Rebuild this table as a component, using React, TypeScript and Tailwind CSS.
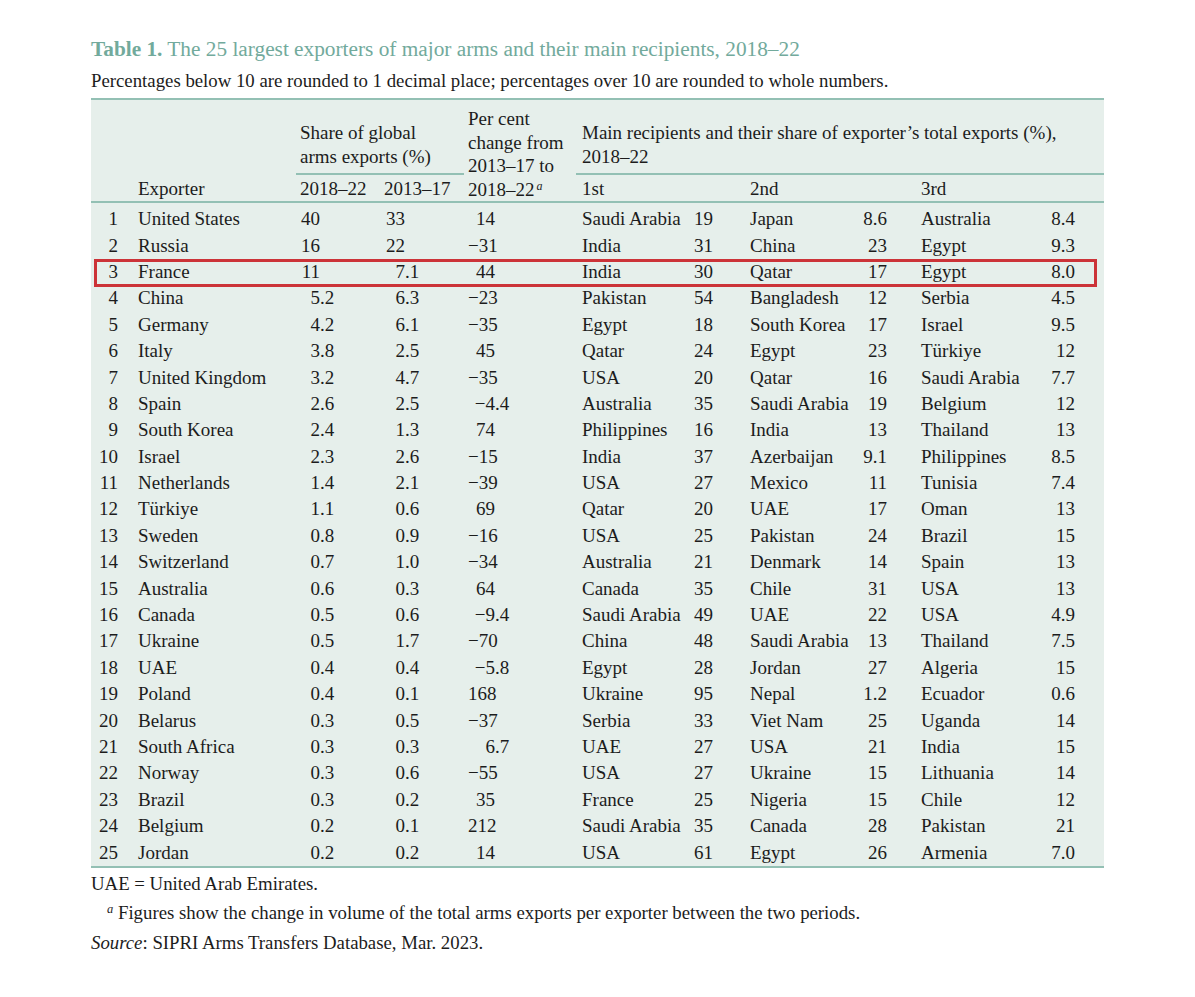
const rows: [string, string, string, string, string, string, string, string, string, string, string][] = [
  ["1", "United States", "40", "33", "14", "Saudi Arabia", "19", "Japan", "8.6", "Australia", "8.4"],
  ["2", "Russia", "16", "22", "−31", "India", "31", "China", "23", "Egypt", "9.3"],
  ["3", "France", "11", "7.1", "44", "India", "30", "Qatar", "17", "Egypt", "8.0"],
  ["4", "China", "5.2", "6.3", "−23", "Pakistan", "54", "Bangladesh", "12", "Serbia", "4.5"],
  ["5", "Germany", "4.2", "6.1", "−35", "Egypt", "18", "South Korea", "17", "Israel", "9.5"],
  ["6", "Italy", "3.8", "2.5", "45", "Qatar", "24", "Egypt", "23", "Türkiye", "12"],
  ["7", "United Kingdom", "3.2", "4.7", "−35", "USA", "20", "Qatar", "16", "Saudi Arabia", "7.7"],
  ["8", "Spain", "2.6", "2.5", "−4.4", "Australia", "35", "Saudi Arabia", "19", "Belgium", "12"],
  ["9", "South Korea", "2.4", "1.3", "74", "Philippines", "16", "India", "13", "Thailand", "13"],
  ["10", "Israel", "2.3", "2.6", "−15", "India", "37", "Azerbaijan", "9.1", "Philippines", "8.5"],
  ["11", "Netherlands", "1.4", "2.1", "−39", "USA", "27", "Mexico", "11", "Tunisia", "7.4"],
  ["12", "Türkiye", "1.1", "0.6", "69", "Qatar", "20", "UAE", "17", "Oman", "13"],
  ["13", "Sweden", "0.8", "0.9", "−16", "USA", "25", "Pakistan", "24", "Brazil", "15"],
  ["14", "Switzerland", "0.7", "1.0", "−34", "Australia", "21", "Denmark", "14", "Spain", "13"],
  ["15", "Australia", "0.6", "0.3", "64", "Canada", "35", "Chile", "31", "USA", "13"],
  ["16", "Canada", "0.5", "0.6", "−9.4", "Saudi Arabia", "49", "UAE", "22", "USA", "4.9"],
  ["17", "Ukraine", "0.5", "1.7", "−70", "China", "48", "Saudi Arabia", "13", "Thailand", "7.5"],
  ["18", "UAE", "0.4", "0.4", "−5.8", "Egypt", "28", "Jordan", "27", "Algeria", "15"],
  ["19", "Poland", "0.4", "0.1", "168", "Ukraine", "95", "Nepal", "1.2", "Ecuador", "0.6"],
  ["20", "Belarus", "0.3", "0.5", "−37", "Serbia", "33", "Viet Nam", "25", "Uganda", "14"],
  ["21", "South Africa", "0.3", "0.3", "6.7", "UAE", "27", "USA", "21", "India", "15"],
  ["22", "Norway", "0.3", "0.6", "−55", "USA", "27", "Ukraine", "15", "Lithuania", "14"],
  ["23", "Brazil", "0.3", "0.2", "35", "France", "25", "Nigeria", "15", "Chile", "12"],
  ["24", "Belgium", "0.2", "0.1", "212", "Saudi Arabia", "35", "Canada", "28", "Pakistan", "21"],
  ["25", "Jordan", "0.2", "0.2", "14", "USA", "61", "Egypt", "26", "Armenia", "7.0"],
];

// decimal-aligned number: integer part right-aligned in a fixed box
function Dec({ v, w }: { v: string; w: string }) {
  const [a, b] = v.split(".");
  return (
    <span className="flex">
      <span className={`${w} text-right`}>{a}</span>
      {b !== undefined && <span>.{b}</span>}
    </span>
  );
}

export default function App() {
  return (
    <div
      className="bg-white w-[1195px] h-[997px] pl-[91px] pt-[35px] text-[#1c1c1c]"
      style={{ fontFamily: '"Liberation Serif", "DejaVu Serif", serif' }}
    >
      <h1 className="text-[21.3px] leading-[29px] text-[#72aa9c]">
        <span className="font-bold">Table 1.</span> The 25 largest exporters of major arms and their main recipients, 2018–22
      </h1>
      <p className="text-[18.8px] leading-[24px] mt-[5px]">
        Percentages below 10 are rounded to 1 decimal place; percentages over 10 are rounded to whole numbers.
      </p>

      <div className="w-[1013px] mt-[5px] bg-[#e6efeb] border-t-2 border-b-2 border-[#93c0b4] text-[19px]">
        {/* header */}
        <div className="flex items-end h-[103px] border-b-2 border-[#93c0b4]">
          <div className="w-[47px]" />
          <div className="w-[162px] leading-[24px]">Exporter</div>
          <div className="w-[168px] flex flex-col">
            <div className="leading-[24px] mr-[4px] pb-[4px] border-b-2 border-[#93c0b4] -ml-[4px] pl-[4px]">
              Share of global
              <br />
              arms exports (%)
            </div>
            <div className="flex leading-[24px] pt-[2px]">
              <div className="w-[84px]">2018–22</div>
              <div className="w-[84px]">2013–17</div>
            </div>
          </div>
          <div className="w-[114px] leading-[23.5px]">
            Per cent
            <br />
            change from
            <br />
            2013–17 to
            <br />
            2018–22<sup className="italic text-[12px] ml-[2px]">a</sup>
          </div>
          <div className="flex-1 flex flex-col">
            <div className="leading-[24px] pb-[4px] border-b-2 border-[#93c0b4] -ml-[6px] pl-[6px]">
              Main recipients and their share of exporter’s total exports (%),
              <br />
              2018–22
            </div>
            <div className="flex leading-[24px] pt-[2px]">
              <div className="w-[168px]">1st</div>
              <div className="w-[171px]">2nd</div>
              <div>3rd</div>
            </div>
          </div>
        </div>

        {/* body */}
        <div className="pt-[3px]">
          {rows.map((r) => (
            <div key={r[0]} className="relative flex items-center h-[26.4px] leading-[26px]">
              <div className="w-[47px] text-right pr-[20px]">{r[0]}</div>
              <div className="w-[162px]">{r[1]}</div>
              <div className="w-[84px]">
                <Dec v={r[2]} w="w-[20px]" />
              </div>
              <div className="w-[84px]">
                <Dec v={r[3]} w="w-[21px]" />
              </div>
              <div className="w-[114px]">
                <Dec v={r[4]} w="w-[27px]" />
              </div>
              <div className="w-[168px] flex pr-[37px]">
                <span className="flex-1">{r[5]}</span>
                <span>{r[6]}</span>
              </div>
              <div className="w-[171px] flex pr-[34px]">
                <span className="flex-1">{r[7]}</span>
                <span>{r[8]}</span>
              </div>
              <div className="flex-1 flex pr-[29px]">
                <span className="flex-1">{r[9]}</span>
                <span>{r[10]}</span>
              </div>
              {r[0] === "3" && (
                <div className="absolute left-[3px] right-[7px] top-[0px] -bottom-[2px] border-[3px] border-[#cc3338]" />
              )}
            </div>
          ))}
        </div>
      </div>

      <div className="text-[18.8px] leading-[29.5px] pt-[1px]">
        <p>UAE = United Arab Emirates.</p>
        <p className="pl-[16px]">
          <sup className="italic text-[12.5px]">a</sup> Figures show the change in volume of the total arms exports per
          exporter between the two periods.
        </p>
        <p>
          <span className="italic">Source</span>: SIPRI Arms Transfers Database, Mar. 2023.
        </p>
      </div>
    </div>
  );
}
